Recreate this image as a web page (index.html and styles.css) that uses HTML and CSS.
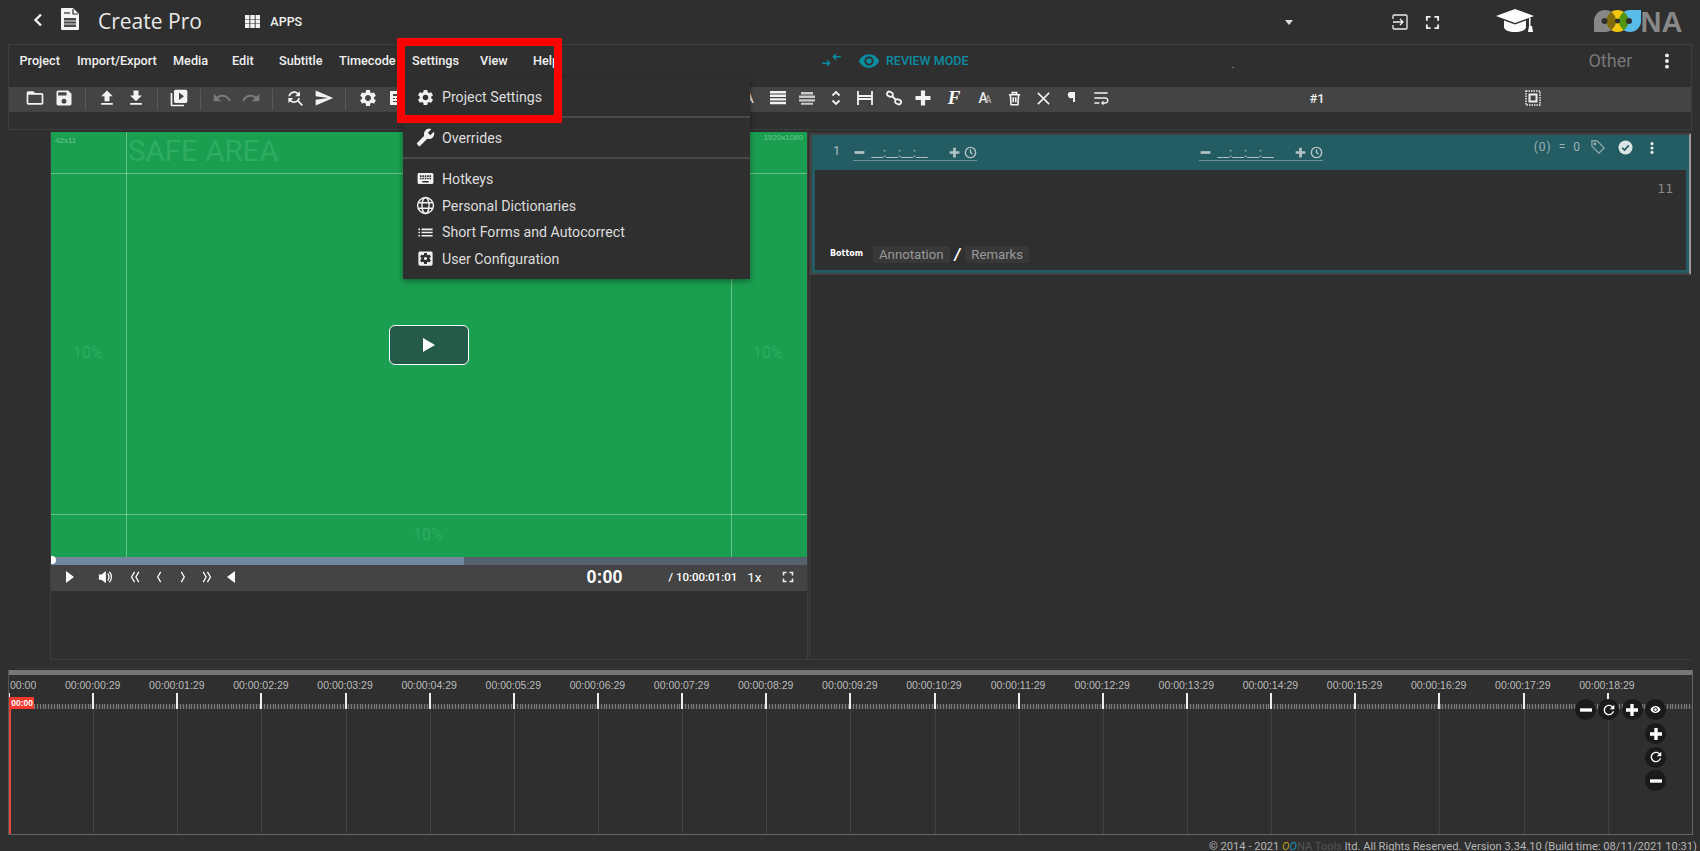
FILE: index.html
```html
<!DOCTYPE html>
<html lang="en">
<head>
<meta charset="utf-8">
<title>Create Pro</title>
<link rel="stylesheet" href="styles.css">
</head>
<body>
<svg class="sprite" aria-hidden="true">
  <symbol id="i-folder" viewBox="0 0 24 24"><path d="M20 6h-8l-2-2H4c-1.1 0-1.99.9-1.99 2L2 18c0 1.1.9 2 2 2h16c1.1 0 2-.9 2-2V8c0-1.1-.9-2-2-2zm0 12H4V8h16v10z"/></symbol>
  <symbol id="i-save" viewBox="0 0 24 24"><path d="M17 3H5c-1.11 0-2 .9-2 2v14c0 1.1.89 2 2 2h14c1.1 0 2-.9 2-2V7l-4-4zm-5 16c-1.66 0-3-1.34-3-3s1.34-3 3-3 3 1.34 3 3-1.34 3-3 3zm3-10H5V5h10v4z"/></symbol>
  <symbol id="i-up" viewBox="0 0 24 24"><path d="M9 16h6v-6h4l-7-7-7 7h4zm-4 2h14v2H5z"/></symbol>
  <symbol id="i-down" viewBox="0 0 24 24"><path d="M19 9h-4V3H9v6H5l7 7 7-7zM5 18v2h14v-2H5z"/></symbol>
  <symbol id="i-lib" viewBox="0 0 24 24"><path d="M4 6H2v14c0 1.1.9 2 2 2h14v-2H4V6zm16-4H8c-1.1 0-2 .9-2 2v12c0 1.1.9 2 2 2h12c1.1 0 2-.9 2-2V4c0-1.1-.9-2-2-2zm-8 12.5v-9l6 4.5-6 4.5z"/></symbol>
  <symbol id="i-undo" viewBox="0 0 24 24"><path d="M12.5 8c-2.65 0-5.05.99-6.9 2.6L2 7v9h9l-3.62-3.62c1.39-1.16 3.16-1.88 5.12-1.88 3.54 0 6.55 2.31 7.6 5.5l2.37-.78C21.08 11.03 17.15 8 12.5 8z"/></symbol>
  <symbol id="i-redo" viewBox="0 0 24 24"><path d="M18.4 10.6C16.55 8.99 14.15 8 11.5 8c-4.65 0-8.58 3.03-9.96 7.22L3.9 16c1.05-3.19 4.05-5.5 7.6-5.5 1.95 0 3.73.72 5.12 1.88L13 16h9V7l-3.6 3.6z"/></symbol>
  <symbol id="i-find" viewBox="0 0 24 24"><path d="M11 6c1.38 0 2.63.56 3.54 1.46L12 10h6V4l-2.05 2.05C14.68 4.78 12.93 4 11 4c-3.53 0-6.43 2.61-6.92 6H6.1c.46-2.28 2.48-4 4.9-4zm5.64 9.14c.66-.9 1.12-1.97 1.28-3.14H15.9c-.46 2.28-2.48 4-4.9 4-1.38 0-2.63-.56-3.54-1.46L10 12H4v6l2.05-2.05C7.32 17.22 9.07 18 11 18c1.55 0 2.98-.51 4.14-1.36L20 21.49 21.49 20l-4.85-4.86z"/></symbol>
  <symbol id="i-send" viewBox="0 0 24 24"><path d="M2.01 21L23 12 2.01 3 2 10l15 2-15 2z"/></symbol>
  <symbol id="i-gear" viewBox="0 0 24 24"><path d="M19.14 12.94c.04-.3.06-.61.06-.94 0-.32-.02-.64-.07-.94l2.03-1.58a.49.49 0 0 0 .12-.61l-1.92-3.32a.488.488 0 0 0-.59-.22l-2.39.96c-.5-.38-1.03-.7-1.62-.94l-.36-2.54a.484.484 0 0 0-.48-.41h-3.84c-.24 0-.43.17-.47.41l-.36 2.54c-.59.24-1.13.57-1.62.94l-2.39-.96c-.22-.08-.47 0-.59.22L2.74 8.87c-.12.21-.08.47.12.61l2.03 1.58c-.05.3-.09.63-.09.94s.02.64.07.94l-2.03 1.58a.49.49 0 0 0-.12.61l1.92 3.32c.12.22.37.29.59.22l2.39-.96c.5.38 1.03.7 1.62.94l.36 2.54c.05.24.24.41.48.41h3.84c.24 0 .44-.17.47-.41l.36-2.54c.59-.24 1.13-.56 1.62-.94l2.39.96c.22.08.47 0 .59-.22l1.92-3.32c.12-.22.07-.47-.12-.61l-2.01-1.58zM12 15.6c-1.98 0-3.6-1.62-3.6-3.6s1.62-3.6 3.6-3.6 3.6 1.62 3.6 3.6-1.62 3.6-3.6 3.6z"/></symbol>
  <symbol id="i-wrench" viewBox="0 0 24 24"><path transform="matrix(-1 0 0 1 24 0)" d="M22.7 19l-9.1-9.1c.9-2.3.4-5-1.5-6.9-2-2-5-2.4-7.4-1.3L9 6 6 9 1.6 4.7C.4 7.1.9 10.1 2.9 12.1c1.9 1.9 4.6 2.4 6.9 1.5l9.1 9.1c.4.4 1 .4 1.4 0l2.3-2.3c.5-.4.5-1.1.1-1.4z"/></symbol>
  <symbol id="i-keyboard" viewBox="0 0 24 24"><path d="M20 5H4c-1.1 0-1.99.9-1.99 2L2 17c0 1.1.9 2 2 2h16c1.1 0 2-.9 2-2V7c0-1.1-.9-2-2-2zm-9 3h2v2h-2V8zm0 3h2v2h-2v-2zM8 8h2v2H8V8zm0 3h2v2H8v-2zm-1 2H5v-2h2v2zm0-3H5V8h2v2zm9 7H8v-2h8v2zm0-4h-2v-2h2v2zm0-3h-2V8h2v2zm3 3h-2v-2h2v2zm0-3h-2V8h2v2z"/></symbol>
  <symbol id="i-globe" viewBox="0 0 24 24"><g fill="none" stroke="currentColor" stroke-width="1.8"><circle cx="12" cy="12" r="10"/><ellipse cx="12" cy="12" rx="4.5" ry="10"/><path d="M2.6 8.5h18.8M2.6 15.5h18.8"/></g></symbol>
  <symbol id="i-list" viewBox="0 0 24 24"><path d="M3 13h2v-2H3v2zm0 4h2v-2H3v2zm0-8h2V7H3v2zm4 4h14v-2H7v2zm0 4h14v-2H7v2zM7 7v2h14V7H7z"/></symbol>
  <symbol id="i-config" viewBox="0 0 24 24"><path d="M12 10c-1.1 0-2 .9-2 2s.9 2 2 2 2-.9 2-2-.9-2-2-2zm7-7H5c-1.11 0-2 .9-2 2v14c0 1.1.89 2 2 2h14c1.11 0 2-.9 2-2V5c0-1.1-.89-2-2-2zm-1.75 9c0 .23-.02.46-.05.68l1.48 1.16c.13.11.17.3.08.45l-1.4 2.42c-.09.15-.27.21-.43.15l-1.74-.7c-.36.28-.76.51-1.18.69l-.26 1.85c-.03.17-.18.3-.35.3h-2.8c-.17 0-.32-.13-.35-.29l-.26-1.85c-.43-.18-.82-.41-1.18-.69l-1.74.7c-.16.06-.34 0-.43-.15l-1.4-2.42c-.09-.15-.05-.34.08-.45l1.48-1.16c-.03-.23-.05-.46-.05-.69 0-.23.02-.46.05-.68l-1.48-1.16c-.13-.11-.17-.3-.08-.45l1.4-2.42c.09-.15.27-.21.43-.15l1.74.7c.36-.28.76-.51 1.18-.69l.26-1.85c.03-.17.18-.3.35-.3h2.8c.17 0 .32.13.35.29l.26 1.85c.43.18.82.41 1.18.69l1.74-.7c.16-.06.34 0 .43.15l1.4 2.42c.09.15.05.34-.08.45l-1.48 1.16c.03.23.05.46.05.69z"/></symbol>
  <symbol id="i-eye" viewBox="0 0 24 24"><path d="M12 4.5C7 4.5 2.73 7.61 1 12c1.73 4.39 6 7.5 11 7.5s9.27-3.11 11-7.5c-1.73-4.39-6-7.5-11-7.5zM12 17c-2.76 0-5-2.24-5-5s2.24-5 5-5 5 2.24 5 5-2.24 5-5 5zm0-8c-1.66 0-3 1.34-3 3s1.34 3 3 3 3-1.34 3-3-1.34-3-3-3z"/></symbol>
  <symbol id="i-dots" viewBox="0 0 24 24"><circle cx="12" cy="4.5" r="2.6"/><circle cx="12" cy="12" r="2.6"/><circle cx="12" cy="19.5" r="2.6"/></symbol>
  <symbol id="i-plus" viewBox="0 0 24 24"><path d="M9.5 3h5v6.5H21v5h-6.500V21h-5v-6.500H3v-5h6.500z"/></symbol>
  <symbol id="i-minus" viewBox="0 0 24 24"><path d="M3 9.500h18v5H3z"/></symbol>
  <symbol id="i-refresh" viewBox="0 0 24 24"><path d="M17.65 6.35C16.2 4.9 14.21 4 12 4c-4.42 0-7.99 3.58-7.99 8s3.57 8 7.99 8c3.73 0 6.84-2.55 7.73-6h-2.08c-.82 2.33-3.04 4-5.65 4-3.31 0-6-2.69-6-6s2.69-6 6-6c1.66 0 3.14.69 4.22 1.780L13 11h7V4l-2.35 2.350z"/></symbol>
  <symbol id="i-clock" viewBox="0 0 24 24"><g fill="none" stroke="currentColor" stroke-width="2.600"><circle cx="12" cy="12" r="9.500"/><path d="M12 6.500V12l3.500 3"/></g></symbol>
  <symbol id="i-fs" viewBox="0 0 24 24"><path fill="none" stroke="currentColor" stroke-width="3" d="M3 9V3h6M15 3h6v6M21 15v6h-6M9 21H3v-6"/></symbol>
  <symbol id="i-wrap" viewBox="0 0 24 24"><path d="M4 19h6v-2H4v2zM20 5H4v2h16V5zm-3 6H4v2h13.250c1.100 0 2 .9 2 2s-.9 2-2 2H15v-2l-3 3 3 3v-2h2c2.210 0 4-1.790 4-4s-1.790-4-4-4z"/></symbol>
  <symbol id="i-trash" viewBox="0 0 24 24"><path fill="none" stroke="currentColor" stroke-width="2.600" d="M3 6h18M8.500 5V2.500h7V5M5.500 6l1 16h11l1-16M10 10v8M14 10v8"/></symbol>
  <symbol id="i-x" viewBox="0 0 24 24"><path fill="none" stroke="currentColor" stroke-width="2.400" d="M3 3l18 18M21 3L3 21"/></symbol>
</svg>

<div class="app">
  <header class="topbar">
    <svg class="back" viewBox="0 0 12 16"><path d="M9 2.500L3.500 8 9 13.500"/></svg>
    <svg class="doc" viewBox="0 0 20 22"><path class="doc-page" d="M2 0h11l6 6v15a1 1 0 0 1-1 1H2a1 1 0 0 1-1-1V1a1 1 0 0 1 1-1z"/><path class="doc-corner" d="M13 1v5h5"/><path class="doc-text" d="M4 5h6"/><path class="doc-block" d="M4 10h12v9H4z"/><path class="doc-lines" d="M4 13h12M4 16h12"/></svg>
    <span class="title">Create Pro</span>
    <svg class="apps-icon" viewBox="0 0 15 13"><path d="M0 0h4.400v3.900H0zM5.300 0h4.400v3.900H5.300zM10.600 0H15v3.900h-4.400zM0 4.600h4.400v3.900H0zM5.300 4.600h4.400v3.900H5.300zM10.600 4.600H15v3.900h-4.400zM0 9.100h4.400V13H0zM5.300 9.100h4.400V13H5.300zM10.600 9.100H15V13h-4.400z"/></svg>
    <span class="apps">APPS</span>
    <span class="caret"></span>
    <svg class="exit" viewBox="0 0 16 16"><path d="M1 5V2a1 1 0 0 1 1-1h12a1 1 0 0 1 1 1v12a1 1 0 0 1-1 1H2a1 1 0 0 1-1-1v-3M1 8h10M8 5l3 3-3 3"/></svg>
    <svg class="top-fs"><use href="#i-fs"/></svg>
    <svg class="cap" viewBox="0 0 38 24"><path d="M0 7L19 0l19 7-19 7z"/><path d="M8 11.500l11 4 11-4V18c0 3-5 5-11 5s-11-2-11-5z"/><path d="M33 9h1.500v8H36l1 6h-5l1-6z"/></svg>
    <svg class="logo" viewBox="0 0 90 22">
      <g class="logo-mark">
        <path class="logo-grey" d="M11 0a11 11 0 0 1 0 22H0V11A11 11 0 0 1 11 0z"/>
        <path class="logo-blue" d="M36 0h11v11a11 11 0 0 1-22 0A11 11 0 0 1 36 0z"/>
        <circle class="logo-yellow" cx="23.500" cy="11" r="11"/>
      </g>
      <circle cx="10.500" cy="11" r="3" class="logo-hole"/><circle cx="23.500" cy="11" r="2.500" class="logo-hole"/><circle cx="35" cy="11" r="3" class="logo-hole"/>
      <text x="46.500" y="21.500" class="logo-text">NA</text>
    </svg>
  </header>

  <section class="menu-panel">
    <div class="menu-row">
      <nav class="menu">
        <span>Project</span><span>Import/Export</span><span>Media</span><span>Edit</span><span>Subtitle</span><span>Timecode</span><span>Settings</span><span>View</span><span>Help</span>
      </nav>
      <svg class="swap" viewBox="0 0 20 14"><path d="M20 3H12M15 0L12 3l3 3M0 10h8M5 7l3 3-3 3"/></svg>
      <svg class="eye"><use href="#i-eye"/></svg>
      <span class="review">REVIEW MODE</span>
      <span class="speck"></span>
      <span class="other">Other</span>
      <svg class="other-dots"><use href="#i-dots"/></svg>
    </div>
    <div class="toolbar">
      <span class="slot"><svg class="ti"><use href="#i-folder"/></svg></span>
      <span class="slot"><svg class="ti"><use href="#i-save"/></svg></span>
      <span class="sep"></span>
      <span class="slot"><svg class="ti"><use href="#i-up"/></svg></span>
      <span class="slot"><svg class="ti"><use href="#i-down"/></svg></span>
      <span class="sep"></span>
      <span class="slot"><svg class="ti"><use href="#i-lib"/></svg></span>
      <span class="sep"></span>
      <span class="slot"><svg class="ti dim"><use href="#i-undo"/></svg></span>
      <span class="slot"><svg class="ti dim"><use href="#i-redo"/></svg></span>
      <span class="sep sep-wide"></span>
      <span class="slot"><svg class="ti"><use href="#i-find"/></svg></span>
      <span class="slot"><svg class="ti"><use href="#i-send"/></svg></span>
      <span class="sep sep-wide"></span>
      <span class="slot"><svg class="ti"><use href="#i-gear"/></svg></span>
      <span class="slot"><svg class="ti small" viewBox="0 0 16 16"><path d="M1 1h14v14H1z M4 4v2h8V4z M4 8v1h2V8z M7 8v1h2V8z M10 8v1h2V8z M4 11v1h8v-1z" fill-rule="evenodd"/></svg></span>
      <span class="slot slot-after-menu"><span class="glyph-a">A</span></span>
      <span class="slot"><svg class="ti" viewBox="0 0 16 16"><path d="M0 1h16v2.400H0zM0 4.600h16V7H0zM0 8.200h16v2.400H0zM0 11.800h16v2.400H0z"/></svg></span>
      <span class="slot"><svg class="ti soft" viewBox="0 0 16 16"><path d="M2 2h12v2.400H2zM0 5.600h16V8H0zM0 9.200h16v2.400H0zM2 12.800h12v2H2z"/></svg></span>
      <span class="slot"><svg class="ti" viewBox="0 0 16 16"><path class="line" d="M4.500 5.500L8 2l3.500 3.500M4.500 10.500L8 14l3.500-3.500"/></svg></span>
      <span class="slot"><svg class="ti" viewBox="0 0 16 16"><path class="line" d="M1 1v14M15 1v14M1 9h14M1 6h14"/></svg></span>
      <span class="slot"><svg class="ti" viewBox="0 0 16 16"><g class="line"><rect x="1" y="2" width="6" height="4.500" rx="2.200" transform="rotate(25 4 4)"/><rect x="9" y="9.500" width="6" height="4.500" rx="2.200" transform="rotate(25 12 12)"/><path d="M6 6l4 4"/></g></svg></span>
      <span class="slot"><svg class="ti"><use href="#i-plus"/></svg></span>
      <span class="slot slot-nudge"><span class="glyph-f">F</span></span>
      <span class="slot slot-nudge"><span class="glyph-aa">A<small>A</small></span></span>
      <span class="slot"><svg class="ti small"><use href="#i-trash"/></svg></span>
      <span class="slot"><svg class="ti small"><use href="#i-x"/></svg></span>
      <span class="slot"><svg class="ti" viewBox="0 0 16 16"><path d="M6 2h5v10H9V8H8a3 3 0 0 1-2-6z"/></svg></span>
      <span class="slot"><svg class="ti"><use href="#i-wrap"/></svg></span>
      <span class="seg-no">#1</span>
      <svg class="focus" viewBox="0 0 16 16"><rect x="1" y="1" width="14" height="14" class="focus-dash"/><rect x="4.500" y="4.500" width="7" height="7" class="focus-solid"/></svg>
    </div>
    <div class="subbar"></div>
  </section>

  <main class="workspace">
    <section class="player">
      <div class="video">
        <span class="guide guide-v guide-left"></span>
        <span class="guide guide-v guide-right"></span>
        <span class="guide guide-h guide-top"></span>
        <span class="guide guide-h guide-bottom"></span>
        <span class="dim-size dim-left">42x11</span>
        <span class="dim-size dim-right">1920x1080</span>
        <span class="safe">SAFE AREA</span>
        <span class="pct pct-left">10%</span>
        <span class="pct pct-right">10%</span>
        <span class="pct pct-bottom">10%</span>
        <button class="play-big"><svg viewBox="0 0 14 16"><path d="M1 1l12 7-12 7z"/></svg></button>
      </div>
      <div class="progress"><div class="progress-fill"></div><span class="progress-knob"></span></div>
      <div class="controls">
        <span class="ctl ctl-play"><svg viewBox="0 0 8 12"><path d="M0 0l8 6-8 6z"/></svg></span>
        <span class="ctl ctl-vol"><svg viewBox="0 0 14 16"><path d="M0 5h3l5-4v14l-5-4H0z"/><path class="ctl-line" d="M10 4c2 2 2 6 0 8M12 2c3 3 3 9 0 12"/></svg></span>
        <span class="ctl"><svg viewBox="0 0 12 14"><path class="ctl-line" d="M5.500 1L2 7l3.500 6M10.500 1L7 7l3.500 6"/></svg></span>
        <span class="ctl"><svg viewBox="0 0 12 14"><path class="ctl-line" d="M8 1L4.500 7 8 13"/></svg></span>
        <span class="ctl"><svg viewBox="0 0 12 14"><path class="ctl-line" d="M4 1l3.500 6L4 13"/></svg></span>
        <span class="ctl"><svg viewBox="0 0 12 14"><path class="ctl-line" d="M1.500 1L5 7l-3.500 6M6.500 1L10 7l-3.500 6"/></svg></span>
        <span class="ctl"><svg viewBox="0 0 8 12"><path d="M8 0L0 6l8 6z"/></svg></span>
        <span class="time">0:00</span>
        <span class="total">/ 10:00:01:01</span>
        <span class="rate">1x</span>
        <svg class="ctl-fs"><use href="#i-fs"/></svg>
      </div>
    </section>

    <section class="subtitles">
      <article class="card">
        <div class="card-inner">
          <div class="card-head">
            <span class="num">1</span>
            <div class="tc">
              <svg><use href="#i-minus"/></svg><span class="tc-value">__:__:__:__</span><svg class="tc-plus"><use href="#i-plus"/></svg><svg class="tc-clock"><use href="#i-clock"/></svg>
            </div>
            <div class="tc tc-out">
              <svg><use href="#i-minus"/></svg><span class="tc-value">__:__:__:__</span><svg class="tc-plus"><use href="#i-plus"/></svg><svg class="tc-clock"><use href="#i-clock"/></svg>
            </div>
            <span class="counts">(0) = 0</span>
            <svg class="tag" viewBox="0 0 16 16"><path d="M1 1h6l8 8-6 6-8-8z"/><circle cx="4.500" cy="4.500" r="1"/></svg>
            <svg class="check" viewBox="0 0 16 16"><circle cx="8" cy="8" r="7.500"/><path d="M4.500 8.300l2.500 2.500 4.500-5"/></svg>
            <svg class="card-dots"><use href="#i-dots"/></svg>
          </div>
          <div class="card-body">
            <span class="char-count">11</span>
            <div class="card-foot">
              <span class="pos">Bottom</span>
              <span class="chip">Annotation</span>
              <span class="slash">/</span>
              <span class="chip">Remarks</span>
            </div>
          </div>
        </div>
      </article>
    </section>
  </main>

  <section class="timeline">
    <div class="tl-bar"></div>
    <div class="tl-labels">
      <span class="tl-first">00:00</span><span>00:00:00:29</span><span>00:00:01:29</span><span>00:00:02:29</span><span>00:00:03:29</span><span>00:00:04:29</span><span>00:00:05:29</span><span>00:00:06:29</span><span>00:00:07:29</span><span>00:00:08:29</span><span>00:00:09:29</span><span>00:00:10:29</span><span>00:00:11:29</span><span>00:00:12:29</span><span>00:00:13:29</span><span>00:00:14:29</span><span>00:00:15:29</span><span>00:00:16:29</span><span>00:00:17:29</span><span>00:00:18:29</span>
    </div>
    <div class="tl-ruler"></div>
    <div class="tl-grid"></div>
    <div class="playhead"><span class="playhead-flag">00:00</span></div>
    <div class="zoom zoom-h">
      <span class="zoom-btn"><svg><use href="#i-minus"/></svg></span>
      <span class="zoom-btn"><svg><use href="#i-refresh"/></svg></span>
      <span class="zoom-btn"><svg><use href="#i-plus"/></svg></span>
      <span class="zoom-btn"><svg class="zoom-eye"><use href="#i-eye"/></svg></span>
    </div>
    <div class="zoom zoom-v">
      <span class="zoom-btn"><svg><use href="#i-plus"/></svg></span>
      <span class="zoom-btn"><svg><use href="#i-refresh"/></svg></span>
      <span class="zoom-btn"><svg><use href="#i-minus"/></svg></span>
    </div>
  </section>

  <footer class="footer">© 2014 - 2021 <b class="oo-y">O</b><b class="oo-b">O</b><span class="oo-n">NA Tools</span> ltd. All Rights Reserved. Version 3.34.10 (Build time: 08/11/2021 10:31)</footer>

  <div class="dropdown">
    <div class="dd-group dd-first"><div class="dd-item"><svg><use href="#i-gear"/></svg>Project Settings</div></div>
    <div class="dd-group dd-second"><div class="dd-item"><svg><use href="#i-wrench"/></svg>Overrides</div></div>
    <div class="dd-group dd-third">
      <div class="dd-item"><svg><use href="#i-keyboard"/></svg>Hotkeys</div>
      <div class="dd-item"><svg><use href="#i-globe"/></svg>Personal Dictionaries</div>
      <div class="dd-item"><svg><use href="#i-list"/></svg>Short Forms and Autocorrect</div>
      <div class="dd-item"><svg><use href="#i-config"/></svg>User Configuration</div>
    </div>
  </div>
  <div class="highlight"></div>
</div>
</body>
</html>
```

FILE: styles.css
```css
* { box-sizing: border-box; }
html, body { margin: 0; height: 100%; overflow: hidden; }
body { background: #2f2f2f; color: #eee; font-family: Roboto, "Liberation Sans", sans-serif; }
.sprite { display: none; }
svg { display: block; fill: currentColor; }
.app { position: relative; width: 1700px; height: 851px; overflow: hidden; }

/* top bar */
.topbar { display: flex; align-items: center; height: 44px; color: #f2f2f2; }
.back { width: 12px; height: 16px; margin-left: 32px; margin-top: -4px; fill: none; stroke: #eee; stroke-width: 2.400; }
.doc { width: 20px; height: 22px; margin-left: 16px; margin-top: -6px; fill: none; }
.doc-page { fill: #f4f4f4; }
.doc-corner { stroke: #2f2f2f; stroke-width: 1.200; }
.doc-text { stroke: #555; stroke-width: 1.500; }
.doc-block { fill: #4a4a4a; }
.doc-lines { stroke: #e0e0e0; stroke-width: 1; }
.title { margin-left: 18px; margin-top: -2px; font: 400 21px "Open Sans", sans-serif; color: #e8e8e8; }
.apps-icon { width: 15px; height: 13px; margin-left: 43.500px; margin-top: -2px; }
.apps { margin-left: 10px; margin-top: -2px; font-size: 12.500px; font-weight: 500; color: #f0f0f0; }
.caret { margin-left: 983px; border: 4px solid transparent; border-top: 5px solid #ddd; border-bottom: 0; }
.exit { width: 16px; height: 16px; margin-left: 99px; fill: none; stroke: #eee; stroke-width: 1.300; }
.top-fs { width: 15px; height: 15px; margin-left: 17px; color: #eee; }
.cap { width: 38px; height: 24px; margin-left: 56px; margin-top: -2px; fill: #fff; }
.logo { width: 90px; height: 22px; margin-left: 60px; margin-top: -2px; overflow: visible; }
.logo-mark { isolation: isolate; }
.logo-grey { fill: #888; }
.logo-yellow { fill: #f2c811; mix-blend-mode: multiply; }
.logo-blue { fill: #57bde8; }
.logo-hole { fill: #2f2f2f; }
.logo-text { font: 700 29px "Liberation Sans", sans-serif; fill: #888; }

/* menu + toolbar */
.menu-panel { width: 1684px; margin-left: 8px; border: 1px solid #3d3d3d; }
.menu-row { display: flex; align-items: flex-start; height: 42px; }
.menu { display: grid; grid-template-columns: 57.5px 96px 59px 47px 60px 73px 68px 53px 40px; margin-left: 10.5px; }
.menu span { font-size: 12.700px; font-weight: 500; line-height: 32px; color: #f0f0f0; white-space: nowrap; }
.swap { width: 19px; height: 13px; margin: 9px 0 0 249px; fill: none; stroke: #0b8ca1; stroke-width: 1.600; }
.eye { width: 22px; height: 22px; margin: 5px 0 0 17px; color: #0b8ca1; }
.review { margin-left: 6px; font-size: 12.500px; font-weight: 500; line-height: 32px; color: #0b8ca1; }
.speck { width: 2px; height: 1px; margin: 22px 0 0 264px; background: #777; }
.other { margin-left: 354px; font-size: 18px; line-height: 32px; color: #777; }
.other-dots { width: 18px; height: 18px; margin: 7px 0 0 26px; color: #eee; }

.toolbar { display: flex; align-items: center; height: 25px; padding: 0 0 3px 11px; background: #444; }
.slot { display: flex; flex: 0 0 29px; justify-content: center; align-items: center; height: 22px; }
.slot-nudge { margin-left: 2px; }
.sep { flex: 0 0 14px; height: 25px; margin-bottom: -3px; }
.sep-wide { flex-basis: 15px; }
.sep::before { content: ""; display: block; width: 1px; height: 21px; margin: 2px auto; background: #5a5a5a; }
.ti { width: 20px; height: 20px; color: #f2f2f2; }
.ti.small { width: 15px; height: 15px; }
.ti.soft { width: 17px; height: 17px; color: #ccc; }
.toolbar .ti[viewBox="0 0 16 16"] { width: 16px; height: 16px; }
.ti.dim { color: #7a7a7a; }
.line { fill: none; stroke: currentColor; stroke-width: 1.800; }
.slot-after-menu { margin-left: 323.500px; }
.glyph-a { font-size: 15px; color: #eee; }
.glyph-f { font: italic 700 19px "Liberation Serif", serif; color: #fff; }
.glyph-aa { font-size: 14px; font-weight: 500; color: #eee; }
.glyph-aa small { font-size: 10px; margin-left: -3px; color: #aaa; }
.seg-no { margin-left: 194px; font-size: 13px; font-weight: 500; color: #eee; }
.focus { width: 16px; height: 16px; margin-left: 200px; fill: none; }
.focus-dash { stroke: #eee; stroke-width: 1.500; stroke-dasharray: 1.500 1; }
.focus-solid { stroke: #eee; stroke-width: 2; }
.subbar { height: 17px; }

/* workspace */
.workspace { display: grid; grid-template-columns: 758px 882px; gap: 1px; height: 530px; margin-left: 50px; padding-top: 2px; }
.player { display: flex; flex-direction: column; border: 1px solid #3c3c3c; border-top: 0; height: 528px; }
.video { position: relative; height: 425px; background: #1a9f50; overflow: hidden; }
.guide { position: absolute; background: rgba(255, 255, 255, .35); }
.guide-v { top: 0; bottom: 0; width: 1px; }
.guide-h { left: 0; right: 0; height: 1px; }
.guide-left { left: 75px; }
.guide-right { left: 680px; }
.guide-top { top: 41px; }
.guide-bottom { top: 382px; }
.dim-size { position: absolute; font: 8px "Liberation Sans", sans-serif; color: #6cc690; }
.dim-left { left: 4px; top: 4px; }
.dim-right { right: 4px; top: 1px; }
.safe { position: absolute; left: 77px; top: 1px; font-size: 29.500px; line-height: 36px; color: #2dac62; white-space: nowrap; }
.pct { position: absolute; font-size: 16px; color: #2dac62; line-height: 20px; }
.pct-left { left: 22px; top: 211px; }
.pct-right { left: 702px; top: 211px; }
.pct-bottom { left: 362px; top: 393px; }
.play-big { position: absolute; left: 338px; top: 193px; display: flex; align-items: center; justify-content: center; width: 80px; height: 40px; padding: 0; background: #255a49; border: 1px solid #fff; border-radius: 6px; }
.play-big svg { width: 14px; height: 16px; fill: #fff; }
.progress { position: relative; height: 8px; background: #56616e; }
.progress-fill { width: 413px; height: 100%; background: #7286a0; }
.progress-knob { position: absolute; left: -3px; top: -1px; width: 8px; height: 8px; border-radius: 50%; background: #fff; clip-path: inset(0 0 0 3px); }
.controls { display: flex; align-items: center; height: 26px; padding: 0 0 2px 7px; background: #444; color: #fff; }
.ctl { display: flex; flex: 0 0 24px; justify-content: center; }
.ctl svg { width: 12px; height: 12px; }
.ctl-play { margin-right: 10.500px; }
.ctl-vol { margin-right: 6px; }
.ctl-vol svg { width: 14px; height: 14px; }
.ctl-line { fill: none; stroke: #fff; stroke-width: 1.500; }
.time { margin-left: 344px; font: 700 18px "Liberation Sans", sans-serif; }
.total { margin-left: 46px; font-size: 11.500px; font-weight: 500; white-space: nowrap; }
.rate { margin-left: 10px; font-size: 13.500px; }
.ctl-fs { width: 12px; height: 12px; margin-left: 20px; color: #eee; }

.subtitles { height: 528px; border: 1px solid #3c3c3c; border-top: 0; border-right: 0; padding: 1px 0 0; }
.card { height: 142px; border: 2px solid #424242; border-right-color: #9a9a9a; }
.card-inner { display: flex; flex-direction: column; height: 100%; border: 3px solid #245c63; border-top: 0; }
.card-head { display: flex; align-items: center; height: 35px; background: #245c63; color: #b5c2c4; }
.num { margin-left: 18px; font-size: 13px; color: #aab9bb; margin-top: -5px; }
.tc { display: flex; align-items: center; width: 124px; height: 16px; margin: 1px 0 0 13px; border-bottom: 1px solid #6d9196; }
.tc svg { width: 13px; height: 13px; flex: none; }
.tc-value { margin-left: 5px; width: 78px; font-size: 13px; line-height: 13px; }
.tc-clock { margin-left: 3px; }
.tc-out { margin-left: 222px; }
.counts { margin-left: auto; margin-top: -11px; font: 12px Roboto, sans-serif; letter-spacing: 1px; word-spacing: 3px; color: #9fb0b2; white-space: pre; }
.tag { width: 14px; height: 14px; margin: -11px 0 0 10px; fill: none; stroke: #9fb0b2; stroke-width: 1.300; }
.check { width: 15px; height: 15px; margin: -11px 0 0 13px; fill: #dbe5e5; }
.check path { fill: none; stroke: #245c63; stroke-width: 1.800; }
.card-dots { width: 14px; height: 14px; margin: -9px 27px 0 12px; color: #eee; }
.card-body { display: flex; flex: 1; flex-direction: column; }
.char-count { align-self: flex-end; margin: 11px 13px 0 0; font: 13px "DejaVu Sans Mono", monospace; color: #888; }
.card-foot { display: flex; align-items: center; margin-top: auto; padding: 0 0 6px 15px; }
.pos { font: 700 8px "DejaVu Sans", sans-serif; color: #fff; width: 43px; margin-top: -3px; }
.chip { height: 17px; padding: 0 6px; font-size: 13.200px; line-height: 17px; color: #999; background: #383838; border-radius: 2px; }
.slash { margin: 0 5px; font: italic 700 16px Roboto, sans-serif; color: #fff; }

/* timeline */
.timeline { position: relative; display: flex; flex-direction: column; width: 1685px; height: 166px; margin: 9px 0 0 8px; border-left: 1px solid #555; border-right: 1px solid #666; border-bottom: 1px solid #666; border-top: 1px solid #282828; box-shadow: 0 -8px 0 -7px #3c3c3c; }
.tl-bar { height: 5px; background: #777; }
.tl-labels { display: flex; height: 18px; overflow: hidden; }
.tl-labels span { flex: 0 0 84.140px; font: 10.500px/21px "Liberation Sans", sans-serif; color: #bbb; text-align: center; white-space: nowrap; }
.tl-labels .tl-first { flex: 0 0 41.600px; padding-left: 1px; text-align: left; }
.tl-ruler {
  height: 16px;
  background:
    repeating-linear-gradient(90deg, #eee 0, #eee 2px, transparent 2px, transparent 84.140px) -1px 0 / 100% 100% no-repeat,
    repeating-linear-gradient(90deg, #7a7a7a 0, #7a7a7a 1px, #3d3d3d 1px, #3d3d3d 2.805px) 0 100% / 100% 5px no-repeat;
}
.tl-grid { flex: 1; background: repeating-linear-gradient(90deg, #424242 0, #424242 1px, transparent 1px, transparent 84.140px); }
.playhead { position: absolute; left: 0; top: 27px; bottom: 0; width: 2px; background: #e6483a; }
.playhead-flag { position: absolute; left: 0; top: 0; width: 25px; height: 14px; padding-right: 1px; overflow: hidden; background: #f5392f; clip-path: polygon(0 0, 100% 0, 100% 12px, 3px 12px, 0 100%); font: 700 8.500px/12px "Liberation Sans", sans-serif; color: #fff; text-align: right; white-space: nowrap; }
.zoom { position: absolute; display: flex; right: 26px; }
.zoom-h { top: 29px; gap: 2.300px; }
.zoom-v { top: 53px; flex-direction: column; gap: 2.700px; }
.zoom-btn { display: flex; align-items: center; justify-content: center; width: 21px; height: 21px; border-radius: 50%; background: #1a1a1a; color: #fff; }
.zoom-btn svg { width: 16px; height: 16px; }
.zoom-btn .zoom-eye { width: 11px; height: 11px; }

/* footer */
.footer { height: 16px; padding: 5px 3px 0 0; font-size: 11.150px; line-height: 14px; text-align: right; color: #b5b5b5; white-space: nowrap; }
.oo-y { font-weight: 400; color: #b89a1e; font-style: italic; }
.oo-b { font-weight: 400; color: #1a8fb5; font-style: italic; }
.oo-n { color: #555; }

/* settings dropdown */
.dropdown { position: absolute; left: 403px; top: 78px; width: 347px; height: 201px; background: #2f2f2f; box-shadow: 0 2px 6px rgba(0, 0, 0, .4); }
.dd-group { display: flex; flex-direction: column; }
.dd-first { height: 40px; justify-content: center; border-bottom: 2px solid #4a4a4a; }
.dd-second { height: 41px; justify-content: center; border-bottom: 2px solid #4a4a4a; }
.dd-third { padding-top: 6.700px; }
.dd-item { display: flex; align-items: center; height: 26.600px; padding-left: 13px; font-size: 14.200px; color: #ddd; white-space: nowrap; }
.dd-item svg { flex: none; width: 19px; height: 19px; margin-right: 7px; color: #f0f0f0; }

.highlight { position: absolute; left: 397px; top: 38px; width: 165px; height: 85px; border: 8px solid #f00; }
```
